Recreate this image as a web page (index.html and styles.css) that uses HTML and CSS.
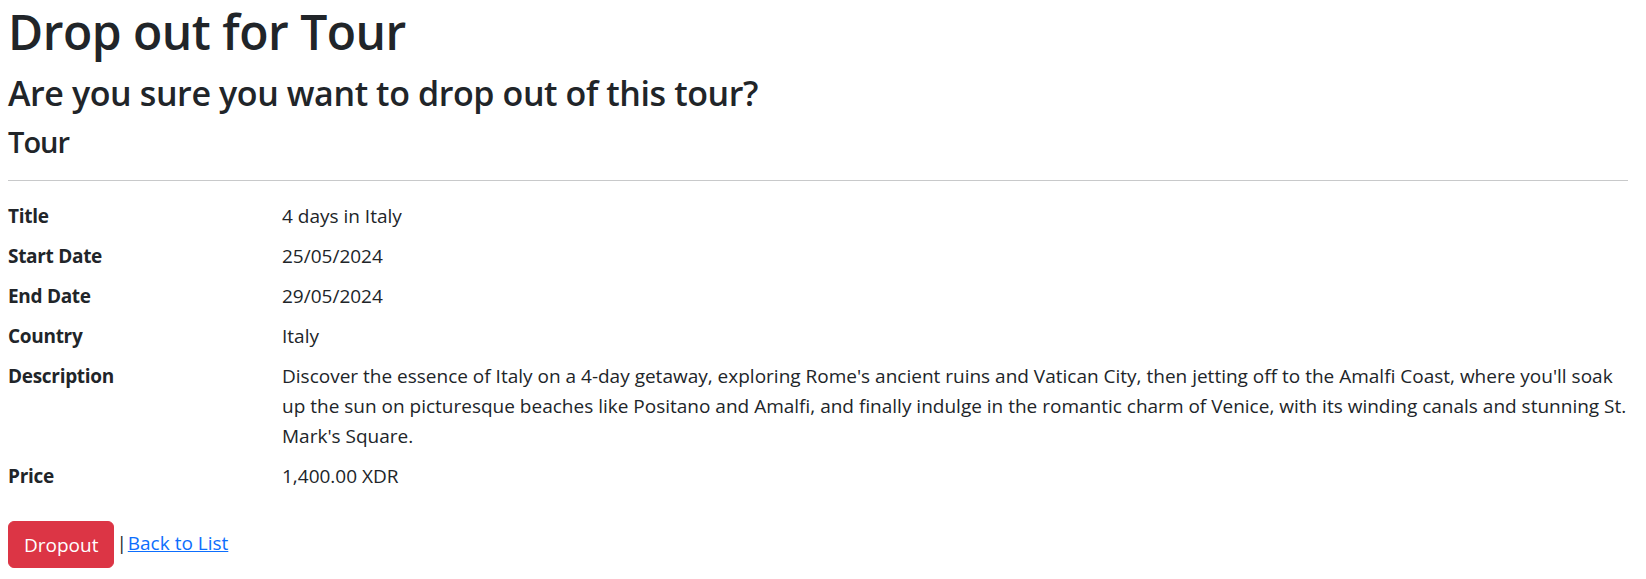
FILE: index.html
```html
<!DOCTYPE html>
<html lang="en">
<head>
<meta charset="utf-8">
<title>Drop out for Tour</title>
<link rel="stylesheet" href="styles.css">
</head>
<body>
<main class="page">
  <h1 class="title">Drop out for Tour</h1>
  <h3 class="question">Are you sure you want to drop out of this tour?</h3>
  <div class="details">
    <h4 class="section">Tour</h4>
    <hr class="rule">
    <dl class="props">
      <dt>Title</dt>
      <dd>4 days in Italy</dd>
      <dt>Start Date</dt>
      <dd>25/05/2024</dd>
      <dt>End Date</dt>
      <dd>29/05/2024</dd>
      <dt>Country</dt>
      <dd>Italy</dd>
      <dt>Description</dt>
      <dd>Discover the essence of Italy on a 4-day getaway, exploring Rome's ancient ruins and Vatican City, then jetting off to the Amalfi Coast, where you'll soak up the sun on picturesque beaches like Positano and Amalfi, and finally indulge in the romantic charm of Venice, with its winding canals and stunning St. Mark's Square.</dd>
      <dt>Price</dt>
      <dd>1,400.00 XDR</dd>
    </dl>
    <form class="actions">
      <button type="button" class="btn-danger">Dropout</button> <span class="sep">|</span> <a href="#" class="back">Back to List</a>
    </form>
  </div>
</main>
</body>
</html>
```

FILE: styles.css
```css
html, body {
  margin: 0;
  padding: 0;
  background: #fff;
}
body {
  font-family: "Open Sans", "Noto Sans", sans-serif;
  font-size: 19px;
  line-height: 30px;
  color: #212529;
}
.page {
  padding: 2px 18px 0 8px;
}
.title, .question, .section {
  margin: 0 0 10px 0;
  font-weight: 600;
}
.title {
  font-size: 48px;
  line-height: 60px;
  letter-spacing: -0.5px;
}
.question {
  font-size: 34px;
  line-height: 42px;
  letter-spacing: -0.4px;
}
.section {
  font-size: 29px;
  line-height: 36px;
  letter-spacing: -1px;
}
.rule {
  margin: 20px 0;
  border: 0;
  border-top: 1px solid #c8c9ca;
  height: 0;
}
.props {
  display: grid;
  grid-template-columns: 250px 1fr;
  column-gap: 24px;
  margin: 0 0 20px 0;
}
.props dt {
  font-weight: 700;
  letter-spacing: -0.3px;
  margin: 0;
}
.props dd {
  margin: 0 0 10px 0;
}
.actions {
  margin: 0;
}
.btn-danger {
  font-family: inherit;
  font-size: 19px;
  line-height: 30px;
  padding: 7.5px 15px;
  border: 1px solid #dc3545;
  border-radius: 6px;
  background: #dc3545;
  color: #fff;
  vertical-align: middle;
}
.sep {
  margin: 0 -4px 0 -3px;
}
.back {
  color: #0d6efd;
  text-decoration: underline;
}
```
